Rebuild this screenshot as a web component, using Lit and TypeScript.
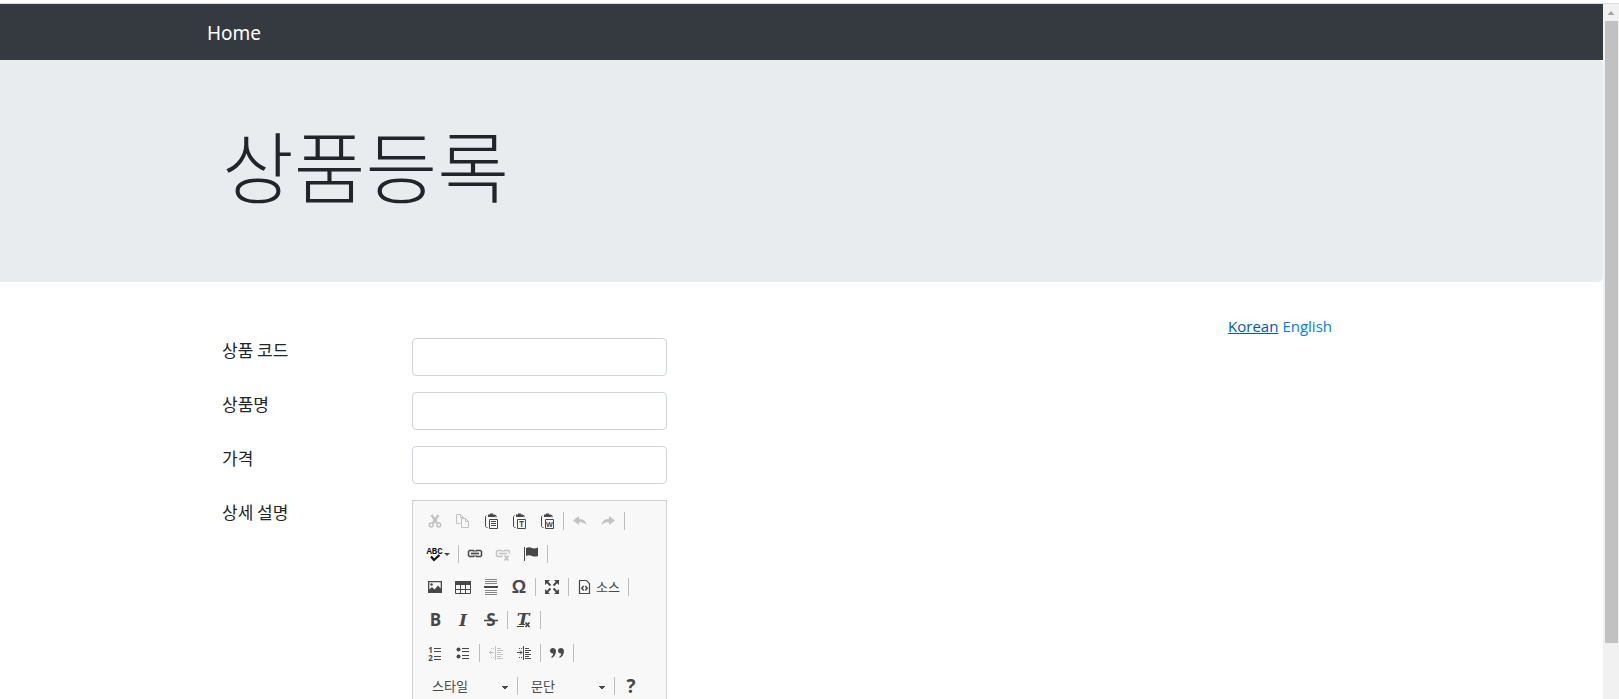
import { LitElement, html, css, svg, nothing } from "lit";
import { customElement, property } from "lit/decorators.js";

const ICONS: Record<string, unknown> = {
  cut: svg`<path d="M4.500 2 10 10M11.500 2 6 10" stroke-width="2.400"/><circle cx="4.200" cy="12" r="1.900" stroke-width="1.500"/><circle cx="11.800" cy="12" r="1.900" stroke-width="1.500"/>`,
  copy: svg`<path d="M5.500 10.500h-4v-9h4l3 3v1M5.500 1.500v3h3M6.500 5.500h4l3 3v6h-7zM10.500 5.500v3h3"/>`,
  paste: svg`<path d="M4.500 14.500h-1l-1-1v-10l1-1M11 2.500h2v2"/><path d="M5 4V1.500h2V.5h3v1h2V4z" class="f"/><path d="M6.500 6.500h8v9h-8zM8 8.500h5M8 10.500h5M8 12.500h5"/>`,
  pasteText: svg`<path d="M4.500 14.500h-1l-1-1v-10l1-1M11 2.500h2v2"/><path d="M5 4V1.500h2V.5h3v1h2V4z" class="f"/><path d="M6.500 6.500h8v9h-8z"/><text x="10.500" y="14" class="t" font-size="8">T</text>`,
  pasteWord: svg`<path d="M4.500 14.500h-1l-1-1v-10l1-1M11 2.500h2v2"/><path d="M5 4V1.500h2V.5h3v1h2V4z" class="f"/><path d="M6.500 6.500h8v9h-8z"/><text x="10.500" y="13.500" class="t" font-size="7">W</text>`,
  undo: svg`<path class="f" d="M1 7.500 7 3v3c4 0 7 2 7.500 6C12.500 9.500 10 9.200 7 9.200V12z"/>`,
  redo: svg`<path class="f" d="M15 7.500 9 3v3c-4 0-7 2-7.500 6C3.500 9.500 6 9.200 9 9.200V12z"/>`,
  spell: svg`<text x="7.500" y="8" class="t" font-size="9">ABC</text><path d="m4 10.500 3 3.500 5.500-5" stroke-width="2.200"/>`,
  link: svg`<path d="M7.500 5.500l-1-1h-4l-1 1v4l1 1h4l1-1M8.500 5.500l1-1h4l1 1v4l-1 1h-4l-1-1" stroke-width="1.500"/><path d="M4 7.500h8" stroke-width="1.700"/>`,
  unlink: svg`<path d="M7.500 5.500l-1-1h-4l-1 1v4l1 1h4l1-1M8.500 5.500l1-1h4l1 1v2M4 7.500h8" stroke-width="1.500"/><path d="m9.500 9.500 4 5m0-5-4 5" stroke-width="1.700"/>`,
  anchor: svg`<path d="M1.500 1v14"/><path class="f" d="M3 2c2-1 4-1 6 0 1 .700 3 .700 6-.500v8.500c-3 1-5 .500-6 0-2-1-4-1-6 0z"/>`,
  image: svg`<path class="f" fill-rule="evenodd" d="M1 2h14v12H1zM2.300 3.300v7.200L5 8l2.500 2.500 3.500-4 2.700 3V3.300z"/><circle class="f" cx="4.500" cy="5.500" r="1.300"/>`,
  table: svg`<path d="M.5 2.500h15v12H.5zM.5 10.500h15M5.500 4v10.500M10.500 4v10.500"/><path class="f" d="M0 2h16v4H0z"/>`,
  rule: svg`<path d="M2 .5h12M2 2.500h12M2 4.500h12M2 11.500h12M2 13.500h12M2 15.500h12" opacity=".65"/><path d="M1 8h14" stroke-width="2"/>`,
  omega: svg`<text x="8" y="14" class="t" font-size="18">Ω</text>`,
  maximize: svg`<path class="f" d="M1 1h5L1 6zM15 1v5l-5-5zM1 15v-5l5 5zM15 15h-5l5-5z"/><path d="m3 3 3.500 3.500M13 3 9.500 6.500M3 13l3.500-3.500M13 13 9.500 9.500" stroke-width="2"/>`,
  source: svg`<path d="M2.500 14.500v-13h7l3 3v10z" stroke-width="1.200"/><path d="M6.700 7 4.800 9.200l1.900 2.200M8.300 7l1.900 2.200-1.900 2.200" stroke-width="1.500"/>`,
  bold: svg`<text x="8.500" y="14" class="t" font-size="17">B</text>`,
  italic: svg`<text x="8" y="14" class="t serif" font-size="17">I</text>`,
  strike: svg`<text x="8" y="14" class="t" font-size="17">S</text><path d="M1 8.500h14" stroke-width="1.500"/>`,
  clear: svg`<text x="7" y="12.500" class="t serif" font-size="17">T</text><path d="M1 14.500h7"/><path d="m9.500 10.500 4 4.500m0-4.500-4 4.500" stroke-width="1.700"/>`,
  numbered: svg`<text x="3.500" y="7.500" class="t" font-size="8">1</text><text x="3.500" y="15.500" class="t" font-size="8">2</text><path d="M7 3.500h7M7 6.500h7M7 11.500h7M7 14.500h7"/>`,
  bulleted: svg`<circle class="f" cx="3.500" cy="4.500" r="2"/><circle class="f" cx="3.500" cy="11.500" r="2"/><path d="M7 3.500h7M7 6.500h7M7 10.500h7M7 13.500h7"/>`,
  outdent: svg`<path d="M7.500 1v14M9 3.500h4M9 5.500h6M9 7.500h4M9 9.500h6M9 11.500h4M9 13.500h6M1 7.500h5M3.500 5.500l-2 2 2 2M3 3.500h1M5 3.500h1M3 12.500h1M5 12.500h1"/>`,
  indent: svg`<path d="M7.500 1v14M9 3.500h4M9 5.500h6M9 7.500h4M9 9.500h6M9 11.500h4M9 13.500h6M1 7.500h5M4 5.500l2 2-2 2M3 3.500h1M5 3.500h1M3 12.500h1M5 12.500h1"/>`,
  quote: svg`<path class="f" d="M1 5.500C1 2 7 2 7 6c0 3.500-2 6-4.500 7v-1.500c1-.7 1.700-1.500 1.700-3C2.500 8.700 1 7.500 1 5.500zM9 5.500C9 2 15 2 15 6c0 3.500-2 6-4.500 7v-1.500c1-.7 1.700-1.500 1.700-3C10.500 8.700 9 7.500 9 5.500z"/>`,
  about: svg`<text x="8" y="15" class="t" font-size="19">?</text>`,
};

@customElement("tool-button")
class ToolButton extends LitElement {
  @property() icon = "";
  @property() label = "";
  @property() text = "";
  @property({ type: Boolean }) menu = false;
  @property({ type: Boolean }) off = false;
  static styles = css`
    :host { display: block; }
    .btn { display: flex; align-items: center; height: 28px; padding: 0 6px; border: 0; background: none; color: #484848; font: 13px "Noto Sans CJK KR", sans-serif; white-space: nowrap; }
    .btn:disabled { color: #484848; opacity: .3; }
    .glyph { width: 16px; height: 16px; fill: none; stroke: currentColor; overflow: visible; }
    .f { fill: currentColor; stroke: none; }
    .t { fill: currentColor; stroke: none; font-family: "Open Sans", sans-serif; font-weight: 700; text-anchor: middle; }
    .serif { font-family: "DejaVu Serif", serif; font-style: italic; }
    .omega .t { font-family: "Liberation Sans", sans-serif; }
    .spell { color: #111; }
    .spell .t { font-family: "Liberation Mono", monospace; }
    .text { padding-left: 3px; line-height: 16px; }
    .caret { margin-left: 1px; border: 3px solid transparent; border-top-color: #484848; border-bottom: 0; }
  `;
  render() {
    return html`<button class="btn" type="button" title=${this.label} aria-label=${this.label} ?disabled=${this.off}>
      <svg class="glyph ${this.icon}" viewBox="0 0 16 16" aria-hidden="true">${ICONS[this.icon]}</svg>${this.text
        ? html`<span class="text">${this.text}</span>` : nothing}${this.menu ? html`<span class="caret"></span>` : nothing}
    </button>`;
  }
}

type Tool = [icon: string, label: string, off?: boolean];
const b = ([icon, label, off]: Tool) => html`<tool-button icon=${icon} label=${label} ?off=${!!off}></tool-button>`;
const sep = html`<span class="sep"></span>`;

@customElement("rich-editor")
class RichEditor extends LitElement {
  static styles = css`
    :host { display: block; border: 1px solid #d1d1d1; background: #f8f8f8; }
    .bar { padding: 6px 8px; }
    .line { display: flex; align-items: center; height: 28px; margin-bottom: 5px; }
    .sep { width: 1px; height: 18px; margin: 0 2px; background: #bcbcbc; }
    .combo { appearance: none; height: 26px; margin: 0 4px 0 5px; padding: 0 6px 2px; border: 0; border-radius: 0; color: #484848; font: 13px "Noto Sans CJK KR", sans-serif;
      background: linear-gradient(#484848, #484848) right 3px center / 6px 1px no-repeat, linear-gradient(#484848, #484848) right 4px top 14px / 4px 1px no-repeat, linear-gradient(#484848, #484848) right 5px top 15px / 2px 1px no-repeat; }
    .style { width: 85px; }
    .format { width: 83px; }
    .area { box-sizing: border-box; display: block; width: 100%; height: 200px; border: 0; border-top: 1px solid #d1d1d1; resize: none; }
  `;
  render() {
    return html`<div class="bar" role="toolbar" aria-label="편집기 도구 모음">
      <div class="line">${([["cut", "잘라내기", true], ["copy", "복사", true], ["paste", "붙여넣기"], ["pasteText", "텍스트로 붙여넣기"], ["pasteWord", "Word에서 붙여넣기"]] as Tool[]).map(b)}${sep}${b(["undo", "실행 취소", true])}${b(["redo", "다시 실행", true])}${sep}</div>
      <div class="line"><tool-button icon="spell" label="맞춤법 검사" menu></tool-button>${sep}${b(["link", "링크"])}${b(["unlink", "링크 지우기", true])}${b(["anchor", "책갈피"])}${sep}</div>
      <div class="line">${b(["image", "이미지"])}${b(["table", "표"])}${b(["rule", "가로 줄"])}${b(["omega", "특수문자"])}${sep}${b(["maximize", "최대화"])}${sep}<tool-button icon="source" label="소스" text="소스"></tool-button>${sep}</div>
      <div class="line">${b(["bold", "굵게"])}${b(["italic", "기울임꼴"])}${b(["strike", "취소선"])}${sep}${b(["clear", "형식 지우기"])}${sep}</div>
      <div class="line">${b(["numbered", "순번 목록"])}${b(["bulleted", "순번 없는 목록"])}${sep}${b(["outdent", "내어쓰기", true])}${b(["indent", "들여쓰기"])}${sep}${b(["quote", "인용 단락"])}${sep}</div>
      <div class="line"><select class="combo style" aria-label="스타일"><option>스타일</option></select>${sep}<select class="combo format" aria-label="문단"><option>문단</option></select>${sep}${b(["about", "정보"])}</div>
    </div>
    <textarea class="area" aria-label="상세 설명"></textarea>`;
  }
}

@customElement("app-root")
class AppRoot extends LitElement {
  static styles = css`
    :host { display: flex; flex-direction: column; height: 100vh; overflow: hidden; background: #fff; color: #212529; font: 16px/24px "Open Sans", "Noto Sans CJK KR", sans-serif; }
    .edge { flex: none; height: 3px; border-bottom: 1px solid #d9dbdd; }
    .view { flex: 1; min-height: 0; display: grid; grid-template-columns: minmax(0, 1fr) 16px; }
    .page { overflow: hidden; }
    .container { box-sizing: border-box; width: calc(100% - 49px); padding: 0 max(15px, calc((100% - 49px - 1110px) / 2)); }
    .nav { background: #343a40; padding: 8px 0; }
    .brand { display: inline-block; color: #fff; font-family: "Noto Sans", sans-serif; font-size: 19px; line-height: 30px; padding: 6px 0 4px; text-decoration: none; margin-left: -15px; }
    .hero { background: #e9ecef; border-radius: 0 5px 5px 0; padding: 64px 0; margin-bottom: 32px; }
    .title { margin: 0 0 14px; font: 300 78px/80px "Noto Sans CJK KR", sans-serif; }
    .lang { display: flex; justify-content: flex-end; gap: 4px; font-size: 15px; }
    .link { color: #007bff; text-decoration: none; }
    .current { color: #0056b3; text-decoration: underline; }
    .row { display: grid; grid-template-columns: 160px 255px; column-gap: 30px; align-items: start; margin-bottom: 16px; }
    .label { font-family: "Noto Sans CJK KR", sans-serif; font-size: 17px; }
    .input { box-sizing: border-box; width: 100%; height: 38px; border: 1px solid #ced4da; border-radius: 4px; padding: 6px 12px; font: inherit; background: #fff; }
    .scroll { background: #f1f1f1; display: flex; flex-direction: column; align-items: center; }
    .up { width: 7px; height: 4px; margin: 7px 0 6px; background: #a3a3a3; clip-path: polygon(50% 0, 100% 100%, 0 100%); }
    .thumb { width: 13px; height: 89.5%; background: #c1c1c1; }
  `;
  render() {
    const fields = [["code", "상품 코드"], ["name", "상품명"], ["price", "가격"]];
    return html`<div class="edge"></div>
      <div class="view">
        <div class="page">
          <nav class="nav"><div class="container"><a class="brand" href="#">Home</a></div></nav>
          <header class="hero"><div class="container"><h1 class="title">상품등록</h1></div></header>
          <main class="container">
            <div class="lang"><a class="link current" href="#ko">Korean</a><a class="link" href="#en">English</a></div>
            <form>
              ${fields.map(([id, text]) => html`<div class="row"><label class="label" for=${id}>${text}</label><input class="input" id=${id} type="text"></div>`)}
              <div class="row"><span class="label">상세 설명</span><rich-editor></rich-editor></div>
            </form>
          </main>
        </div>
        <div class="scroll" aria-hidden="true"><span class="up"></span><span class="thumb"></span></div>
      </div>`;
  }
}
